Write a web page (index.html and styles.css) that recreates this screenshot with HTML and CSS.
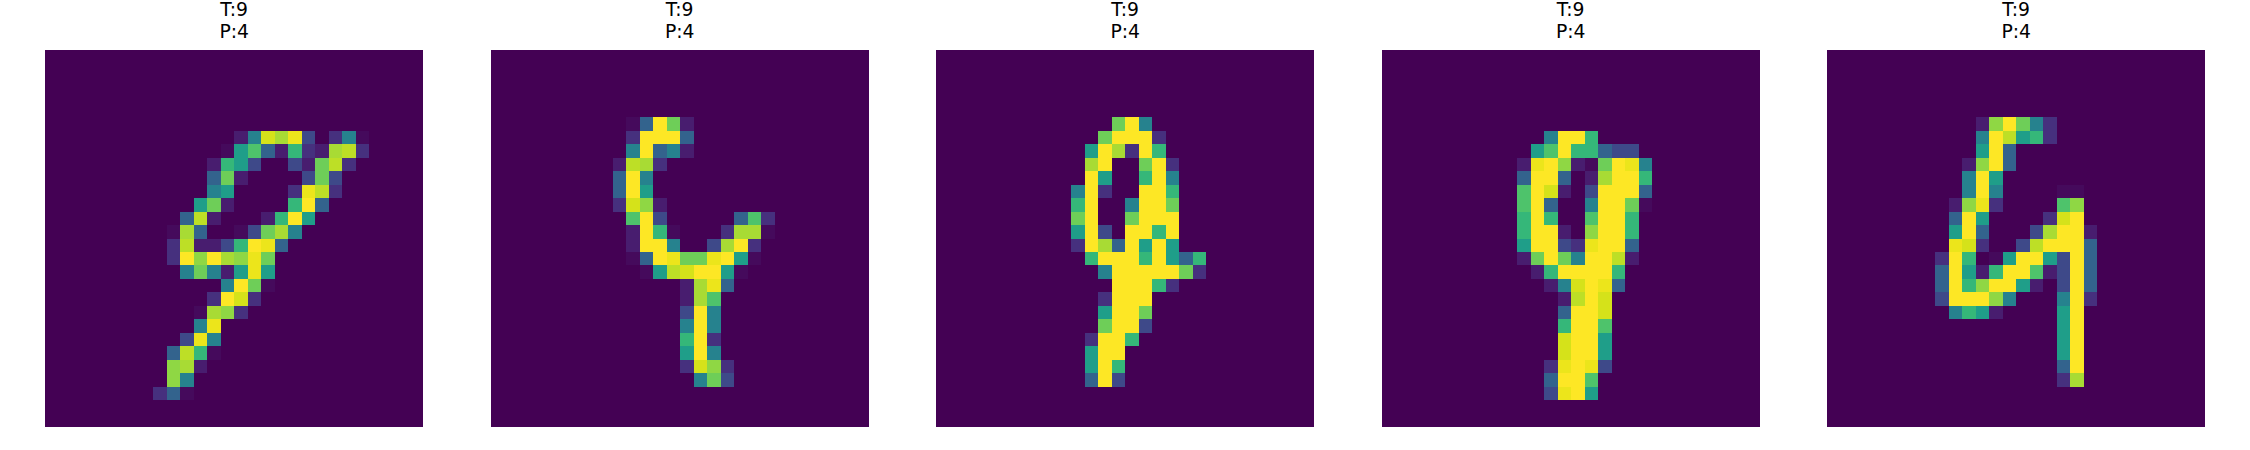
FILE: index.html
```html
<html>
<head>
  <title>T:9 P:4 misclassified digits</title>
  <meta charset="UTF-8">
  <link rel="stylesheet" href="styles.css">
</head>
<body>
  <div class="figure">
    <div class="panel">
      <div class="title">T:9<br>P:4</div>
      <canvas class="digit" width="28" height="28"></canvas>
    </div>
    <div class="panel">
      <div class="title">T:9<br>P:4</div>
      <canvas class="digit" width="28" height="28"></canvas>
    </div>
    <div class="panel">
      <div class="title">T:9<br>P:4</div>
      <canvas class="digit" width="28" height="28"></canvas>
    </div>
    <div class="panel">
      <div class="title">T:9<br>P:4</div>
      <canvas class="digit" width="28" height="28"></canvas>
    </div>
    <div class="panel">
      <div class="title">T:9<br>P:4</div>
      <canvas class="digit" width="28" height="28"></canvas>
    </div>
  </div>
  <script src="digits.js"></script>
</body>
</html>
```

FILE: styles.css
```css
body {
  margin: 0;
  background: #fff;
  font-family: 'DejaVu Sans', sans-serif;
  overflow: hidden;
  color: #000;
}

.figure {
  display: flex;
  gap: 67.5px;
  padding-left: 45.2px;
}

.panel {
  width: 378px;
}

.title {
  height: 51px;
  margin-top: -1px;
  font-size: 18.75px;
  line-height: 21.5px;
  text-align: center;
}

.digit {
  display: block;
  width: 378px;
  height: 377px;
  image-rendering: pixelated;
}
```

FILE: digits.js
```js
// viridis steps, one hex char per cell
const colors = {
  '.': '#440154', '0': '#450a5c', '1': '#481d6f', '2': '#46307e',
  '3': '#3e4989', '4': '#33638d', '5': '#26828e', '6': '#1f9e89',
  '7': '#35b779', '8': '#4ec36b', '9': '#6ece58', 'a': '#8fd744',
  'b': '#a8db34', 'c': '#bddf26', 'd': '#d5e21a', 'e': '#ece51b',
  'f': '#fde725'
};

// each digit: first row, then "column:cells" per row
const digits = [
  [6, '14:15dbe3.250', '13:06841721bc2', '12:1763..319c2', '12:491....393', '12:56....2ec2',
    '11:691....7f4', '10:4c1...17f6', '9:0b4..039b5', '9:2c1137fe4', '9:2fafbae9',
    '10:59516e6', '13:5f90', '12:2fd2', '11:0ba2', '11:5e', '10:3e5', '9:4c70', '9:ab1', '9:a5', '8:240'],
  [5, '10:04f91', '10:2fff4', '10:5f451', '9:1cb2', '9:4f5', '9:4f6', '9:2da1',
    '10:8f3.....482', '10:1f70...2bb0', '10:1ff5..3bf2', '10:04fe99ef60', '11:06cdff60',
    '14:1be4', '14:1b8', '14:3f5', '14:5f5', '14:7f2', '14:6f5', '14:2da2', '15:593'],
  [5, '13:9f5', '12:9fff2', '11:6fb2f7', '11:bf..9f2', '11:f6..7f5', '10:5f2..ff7',
    '10:7f..5ff9', '10:9f..9fff', '10:6f3.ff7f', '10:2fb4f6f6', '11:7fff7f647',
    '12:5fffff92', '13:fff72', '12:2fff', '12:6ff9', '12:9ff3', '11:2ff7', '11:6ff', '11:6f7', '11:4f3'],
  [6, '12:5ff7', '11:68f77433', '10:1efa109fe5', '10:4ff4.1bff7', '10:8fd1.3fff4',
    '10:8f4..5ff90', '10:7f7..8ff7', '10:7ff1.aff7', '10:6ff32eff4', '10:19f95ffc1',
    '11:17ffff7', '12:15dfe4', '13:1cfd', '13:4ffd', '13:7ff8', '13:dff6', '13:dff6',
    '12:2efe3', '12:4ff8', '12:3ef6'],
  [5, '11:1af952', '11:5fc672', '11:6f4', '10:1af4', '10:5f6', '10:5f5....00',
    '9:1ae2....8a', '9:4f6....2df', '9:6f4...3bff1', '9:ed2..3cfff4', '8:2f7.06ff63f4',
    '8:4f617ff813f4', '8:4f7aff61.3f4', '8:3fffa5...5f2', '9:5761....6f',
    '17:6f', '17:6f', '17:6f', '17:4f', '17:2b']
];

document.querySelectorAll('.digit').forEach((canvas, i) => {
  const ctx = canvas.getContext('2d');
  const [firstRow, ...rows] = digits[i];
  ctx.fillStyle = colors['.'];
  ctx.fillRect(0, 0, 28, 28);
  rows.forEach((row, r) => {
    const [col, cells] = row.split(':');
    [...cells].forEach((c, k) => {
      ctx.fillStyle = colors[c];
      ctx.fillRect(Number(col) + k, firstRow + r, 1, 1);
    });
  });
});
```
